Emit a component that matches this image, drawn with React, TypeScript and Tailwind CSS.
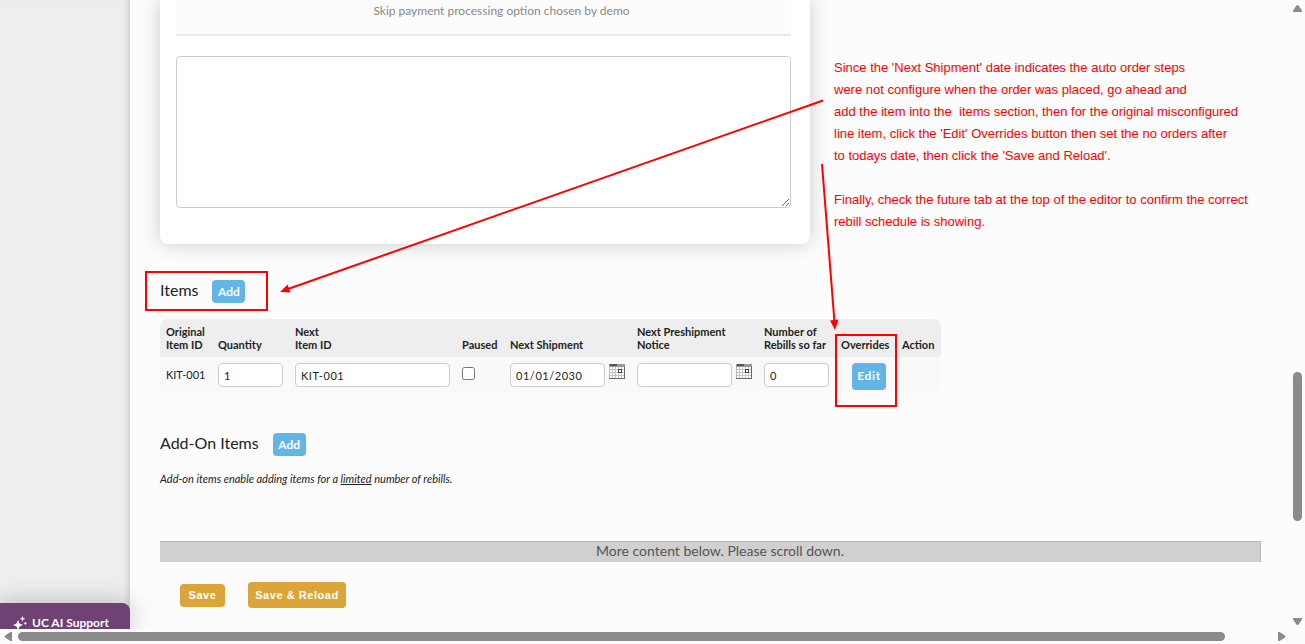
import type { ReactNode } from "react";

function AddButton({ label }: { label: string }) {
  return (
    <button
      type="button"
      aria-label={label}
      className="h-[23px] w-[33px] rounded bg-[#62b5e5] text-xs font-bold text-white"
    >
      Add
    </button>
  );
}

function SectionTitle({ children }: { children: ReactNode }) {
  return <h2 className="pb-1 text-base leading-5">{children}</h2>;
}

function CalendarIcon() {
  return (
    <svg width="16" height="15" viewBox="0 0 16 15" shapeRendering="crispEdges" aria-hidden="true">
      <rect width="16" height="15" fill="#fff" />
      <path d="M0 5.5H16M0 8.5H16M0 11.5H16M3.5 3V15M6.5 3V15M9.5 3V15M12.5 3V15" stroke="#c4c4c4" />
      <path d="M0.5 3V15" stroke="#bbb" />
      <path d="M15.5 3V14.5H0" fill="none" stroke="#666" />
      <rect width="16" height="3" fill="#999" />
      <rect x="1" width="7" height="2" fill="#555" />
      <rect x="9.5" y="5.5" width="3" height="3" fill="#fff" stroke="#444" />
    </svg>
  );
}

function CalendarButton({ label }: { label: string }) {
  return (
    <button type="button" aria-label={label} className="mt-px shrink-0 self-start">
      <CalendarIcon />
    </button>
  );
}

function Field({ label, value }: { label: string; value: string }) {
  return (
    <input
      type="text"
      aria-label={label}
      defaultValue={value}
      className="block h-6 w-full min-w-0 rounded border border-[#ccc] bg-white px-[5px] text-[11px] tracking-wider text-[#222]"
    />
  );
}

function ItemsTable() {
  return (
    <table className="mt-4 w-[781px] table-fixed border-separate border-spacing-0 overflow-hidden rounded-lg text-left">
      <colgroup>
        <col className="w-[52px]" />
        <col className="w-[77px]" />
        <col className="w-[167px]" />
        <col className="w-12" />
        <col className="w-[127px]" />
        <col className="w-[127px]" />
        <col className="w-[77px]" />
        <col className="w-[61px]" />
        <col className="w-[45px]" />
      </colgroup>
      <thead className="bg-[#eee] text-[11px] leading-[13px] whitespace-nowrap">
        <tr className="h-[38px] align-bottom [&>th]:px-[6px] [&>th]:pb-[6px] [&>th]:font-bold">
          <th>Original<br />Item ID</th>
          <th>Quantity</th>
          <th>Next<br />Item ID</th>
          <th>Paused</th>
          <th>Next Shipment</th>
          <th>Next Preshipment<br />Notice</th>
          <th>Number of<br />Rebills so far</th>
          <th>Overrides</th>
          <th>Action</th>
        </tr>
      </thead>
      <tbody className="bg-[#f9f9f9] text-[11px] whitespace-nowrap">
        <tr className="h-9 [&>td]:px-[6px]">
          <td>KIT-001</td>
          <td><Field label="Quantity" value="1" /></td>
          <td><Field label="Next Item ID" value="KIT-001" /></td>
          <td>
            <input type="checkbox" aria-label="Paused" className="mb-1 block size-[13px]" />
          </td>
          <td>
            <div className="flex items-center gap-1">
              <Field label="Next Shipment" value="01/01/2030" />
              <CalendarButton label="Pick next shipment date" />
            </div>
          </td>
          <td>
            <div className="flex items-center gap-1">
              <Field label="Next Preshipment Notice" value="" />
              <CalendarButton label="Pick preshipment notice date" />
            </div>
          </td>
          <td><Field label="Number of rebills so far" value="0" /></td>
          <td className="pt-[2px] text-right">
            <button
              type="button"
              className="mr-1 h-[27px] w-[34px] rounded bg-[#62b5e5] text-xs font-bold tracking-wider text-white"
            >
              Edit
            </button>
          </td>
          <td></td>
        </tr>
      </tbody>
    </table>
  );
}

function Note() {
  return (
    <aside className="mt-[57px] ml-6 font-['Liberation_Sans',Arial,sans-serif] text-[13px] leading-[22px] whitespace-pre text-[#f00]">
      <p>
        Since the 'Next Shipment' date indicates the auto order steps<br />
        were not configure when the order was placed, go ahead and<br />
        {"add the item into the  items section, then for the original misconfigured"}<br />
        line item, click the 'Edit' Overrides button then set the no orders after<br />
        to todays date, then click the 'Save and Reload'.
      </p>
      <p className="mt-[22px]">
        Finally, check the future tab at the top of the editor to confirm the correct<br />
        rebill schedule is showing.
      </p>
    </aside>
  );
}

// Arrows and frames drawn over the page
function Markup() {
  return (
    <svg
      className="pointer-events-none absolute top-0 left-0"
      width="940"
      height="420"
      viewBox="0 0 940 420"
      fill="none"
      stroke="#f00"
      strokeWidth="2"
      aria-hidden="true"
    >
      <rect x="146" y="272" width="121" height="38" />
      <rect x="836" y="335" width="60" height="71" />
      <path d="M823 100.500L288 289M822 164L834.500 322" />
      <path d="M280 292L287.500 284.500L290.500 292.500ZM835 330L830 320.500L838.500 319.500Z" fill="#f00" stroke="none" />
    </svg>
  );
}

function VerticalScrollbar() {
  return (
    <div className="flex w-[15px] shrink-0 flex-col items-center pt-[5px] pb-1" aria-hidden="true">
      <svg width="9" height="7" viewBox="0 0 9 7" fill="#8b8b8b">
        <path d="M3.500 0.500Q4.500-.5 5.500.5L9 5.500V7H0V5.500Z" />
      </svg>
      <div className="grow-[360]" />
      <div className="h-[149px] w-[9px] rounded-full bg-[#8b8b8b]" />
      <div className="grow-[97]" />
      <svg width="9" height="7" viewBox="0 0 9 7" fill="#8b8b8b">
        <path d="M0 0H9V1.500L5.500 6.500Q4.500 7.500 3.500 6.500L0 1.500Z" />
      </svg>
    </div>
  );
}

function HorizontalScrollbar() {
  return (
    <div className="flex h-[15px] shrink-0 items-center bg-[#fcfcfc] pr-[19px] pl-1" aria-hidden="true">
      <svg width="8" height="9" viewBox="0 0 8 9" fill="#8b8b8b">
        <path d="M8 0H6.500L1 3.500Q0 4.500 1 5.500L6.500 9H8Z" />
      </svg>
      <div className="ml-[6px] h-[9px] grow-[1207] rounded-full bg-[#8b8b8b]" />
      <div className="grow-[53]" />
      <svg width="8" height="9" viewBox="0 0 8 9" fill="#8b8b8b">
        <path d="M0 0H1.500L7 3.500Q8 4.500 7 5.500L1.500 9H0Z" />
      </svg>
    </div>
  );
}

function SupportButton() {
  return (
    <button
      type="button"
      className="relative z-10 flex h-[26px] w-full items-center gap-1 rounded-tr-lg bg-[#704174] pt-[14px] pl-[13px] text-xs font-bold whitespace-nowrap text-white shadow-[0_0_24px_rgba(0,0,0,0.25)]"
    >
      <svg width="15" height="14" viewBox="0 0 15 14" fill="#fff" aria-hidden="true">
        <path d="M5 4L6.500 7.500L10 9L6.500 10.500L5 14L3.500 10.500L0 9L3.500 7.500ZM9.500 0L10.300 2L12.300 2.800L10.300 3.600L9.500 5.600L8.700 3.600L6.700 2.800L8.700 2ZM12.300 5.500L12.900 6.800L14.200 7.400L12.900 8L12.300 9.300L11.700 8L10.400 7.400L11.700 6.800Z" />
      </svg>
      UC AI Support
    </button>
  );
}

export default function App() {
  return (
    <div className="relative flex min-h-screen flex-col overflow-hidden bg-[#fcfcfc] font-['Lato',sans-serif] text-[#222]">
      <div className="flex flex-1 overflow-hidden">
        <nav className="flex w-[130px] shrink-0 flex-col justify-end bg-[#eee] shadow-[inset_-6px_0_6px_-4px_rgba(0,0,0,0.15)]">
          <SupportButton />
        </nav>

        <main className="min-w-0 flex-1 pr-[29px] pb-[21px] pl-[30px]">
          <div className="flex items-start">
            <section className="w-[650px] shrink-0 rounded-b-lg bg-white pr-[19px] pb-9 pl-4 shadow-[0_0_20px_rgba(0,0,0,0.2)]">
              <p className="h-9 border-b-2 border-[#e8e8e8] bg-[#fcfcfc] pt-px pl-9 text-center text-xs leading-5 text-[#888]">
                Skip payment processing option chosen by demo
              </p>
              <textarea
                aria-label="Payment notes"
                className="mt-5 block h-[152px] w-full resize rounded border border-[#ccc] bg-white"
              />
            </section>
            <Note />
          </div>

          <div className="mt-9 flex h-[23px] items-center gap-[14px]">
            <SectionTitle>Items</SectionTitle>
            <AddButton label="Add item" />
          </div>
          <ItemsTable />

          <div className="mt-10 flex h-[23px] items-center gap-[14px]">
            <SectionTitle>Add-On Items</SectionTitle>
            <AddButton label="Add add-on item" />
          </div>
          <p className="mt-[14px] text-[11px] leading-[18px] italic">
            Add-on items enable adding items for a <span className="underline">limited</span> number of rebills.
          </p>

          <div className="mt-[53px] h-[21px] border-t border-r border-[#b8b8b8] bg-[#d0d0d0] pl-5 text-center text-sm leading-[18px] text-[#555]">
            More content below. Please scroll down.
          </div>

          <div className="mt-5 flex items-center gap-[23px] pl-5 font-['Liberation_Sans',Arial,sans-serif] text-[11px] font-bold tracking-wider text-white">
            <button type="button" className="h-[23px] w-[45px] rounded bg-[#dba53a]">Save</button>
            <button type="button" className="h-[26px] w-[98px] rounded bg-[#dba53a] whitespace-nowrap">Save &amp; Reload</button>
          </div>
        </main>

        <VerticalScrollbar />
      </div>
      <HorizontalScrollbar />
      <Markup />
    </div>
  );
}
